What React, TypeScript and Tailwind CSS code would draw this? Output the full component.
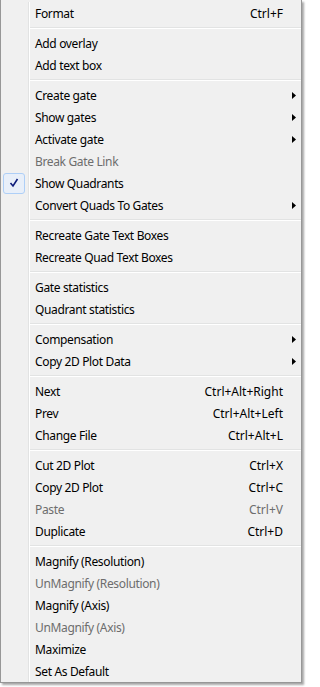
import React from 'react';

type Item = {
  label?: string;
  shortcut?: string;
  sub?: boolean;
  disabled?: boolean;
  checked?: boolean;
  sep?: boolean;
};

const items: Item[] = [
  { label: 'Format', shortcut: 'Ctrl+F' },
  { sep: true },
  { label: 'Add overlay' },
  { label: 'Add text box' },
  { sep: true },
  { label: 'Create gate', sub: true },
  { label: 'Show gates', sub: true },
  { label: 'Activate gate', sub: true },
  { label: 'Break Gate Link', disabled: true },
  { label: 'Show Quadrants', checked: true },
  { label: 'Convert Quads To Gates', sub: true },
  { sep: true },
  { label: 'Recreate Gate Text Boxes' },
  { label: 'Recreate Quad Text Boxes' },
  { sep: true },
  { label: 'Gate statistics' },
  { label: 'Quadrant statistics' },
  { sep: true },
  { label: 'Compensation', sub: true },
  { label: 'Copy 2D Plot Data', sub: true },
  { sep: true },
  { label: 'Next', shortcut: 'Ctrl+Alt+Right' },
  { label: 'Prev', shortcut: 'Ctrl+Alt+Left' },
  { label: 'Change File', shortcut: 'Ctrl+Alt+L' },
  { sep: true },
  { label: 'Cut 2D Plot', shortcut: 'Ctrl+X' },
  { label: 'Copy 2D Plot', shortcut: 'Ctrl+C' },
  { label: 'Paste', shortcut: 'Ctrl+V', disabled: true },
  { label: 'Duplicate', shortcut: 'Ctrl+D' },
  { sep: true },
  { label: 'Magnify (Resolution)' },
  { label: 'UnMagnify (Resolution)', disabled: true },
  { label: 'Magnify (Axis)' },
  { label: 'UnMagnify (Axis)', disabled: true },
  { label: 'Maximize' },
  { label: 'Set As Default' },
];

function Gutter({ children }: { children?: React.ReactNode }) {
  return (
    <div className="flex shrink-0 self-stretch">
      <div className="w-[28px] flex items-center border-r border-[#e2e3e3]">
        {children}
      </div>
      <div className="w-px bg-white" />
    </div>
  );
}

export default function App() {
  return (
    <div className="w-[303px] h-[687px] bg-white" style={{ fontFamily: '"Noto Sans", "Segoe UI", sans-serif' }}>
      <div className="w-[302px] bg-[#f0f0f0] border-l border-r border-b border-[#979797] shadow-[2px_2px_2px_rgba(0,0,0,0.35)] pt-[2px] flex flex-col">
        {items.map((item, i) =>
          item.sep ? (
            <div key={i} className="flex h-[8px] shrink-0">
              <Gutter />
              <div className="flex-1 flex flex-col pt-[3px]">
                <div className="h-px bg-[#e2e3e3]" />
                <div className="h-px bg-white" />
              </div>
            </div>
          ) : (
            <div
              key={i}
              className={`flex h-[22px] shrink-0 items-center text-[12px] ${
                item.disabled ? 'text-[#6d6d6d]' : 'text-black'
              }`}
            >
              <Gutter>
                {item.checked && (
                  <div className="ml-[2px] w-[22px] h-[21px] rounded-[3px] border border-[#aecff7] bg-[#e8eff9] flex items-center justify-center">
                    <svg width="10" height="10" viewBox="0 0 10 10">
                      <path d="M1.5 5 L4 8 L8.5 1" fill="none" stroke="#0d1c7a" strokeWidth="1.6" />
                    </svg>
                  </div>
                )}
              </Gutter>
              <span className="pl-[5px] pt-[2px] flex-1 whitespace-nowrap tracking-[-0.35px]">{item.label}</span>
              {item.shortcut && <span className="pt-[2px] whitespace-nowrap">{item.shortcut}</span>}
              <div className="w-[18px] flex justify-center pl-[4px]">
                {item.sub && (
                  <svg width="4" height="7" viewBox="0 0 4 7">
                    <path d="M0 0 L4 3.5 L0 7 Z" fill="#000" />
                  </svg>
                )}
              </div>
            </div>
          )
        )}
      </div>
    </div>
  );
}
